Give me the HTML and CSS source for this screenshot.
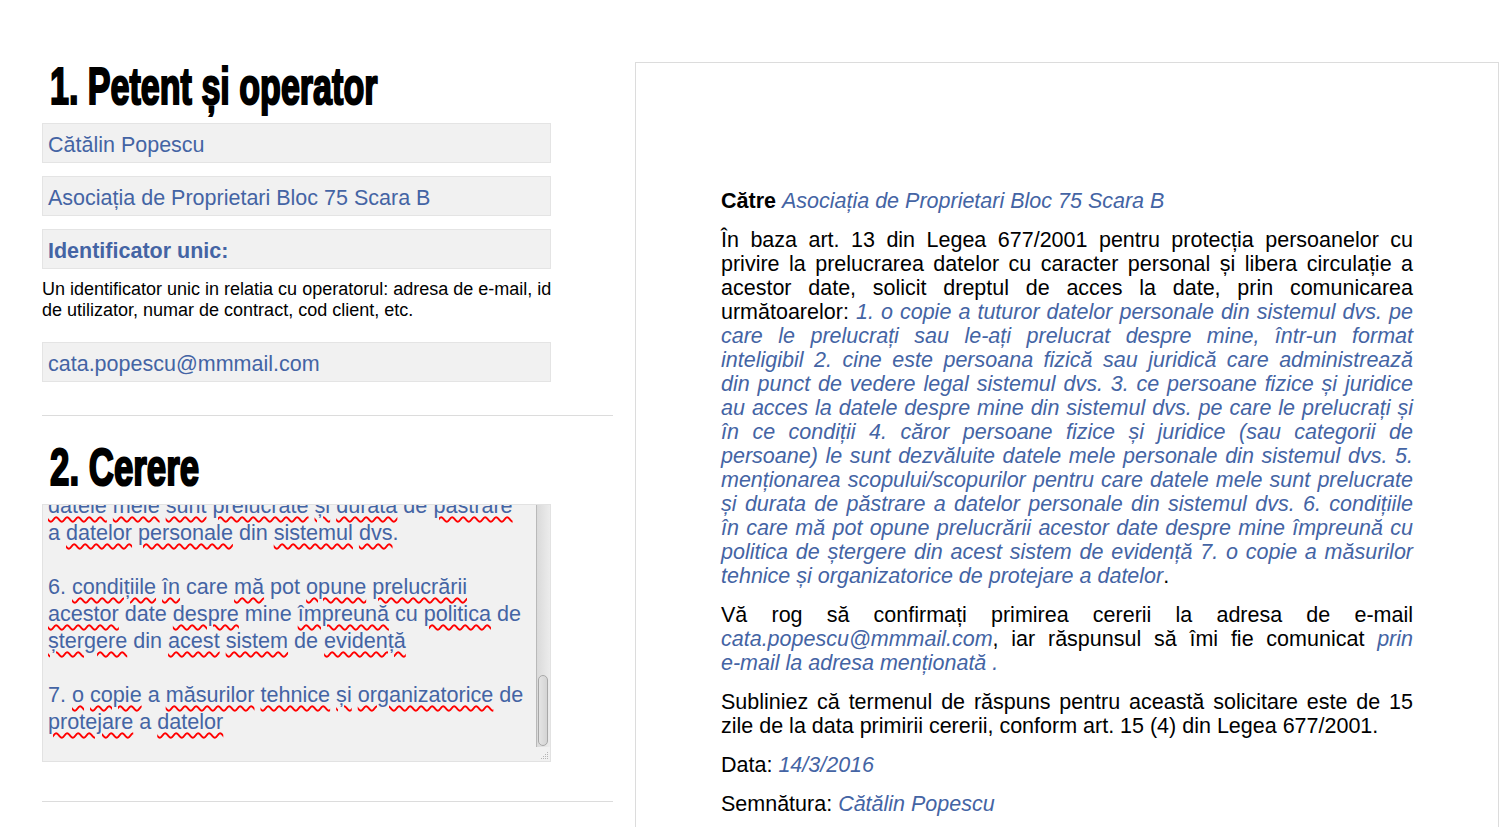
FILE: index.html
```html
<!DOCTYPE html>
<html lang="ro">
<head>
<meta charset="utf-8">
<title>Cerere acces date</title>
<link rel="stylesheet" href="styles.css">
</head>
<body>
<div class="page">
  <div class="left">
    <h1 class="title"><span>1. Petent și operator</span></h1>
    <div class="field">Cătălin Popescu</div>
    <div class="field">Asociația de Proprietari Bloc 75 Scara B</div>
    <div class="field field-bold">Identificator unic:</div>
    <p class="desc">Un identificator unic in relatia cu operatorul: adresa de e-mail, id de utilizator, numar de contract, cod client, etc.</p>
    <div class="field field-gap">cata.popescu@mmmail.com</div>
    <hr class="rule rule-1">
    <h1 class="title title-2"><span>2. Cerere</span></h1>
    <div class="textarea">
      <div class="ta-content">
        <div class="ta-line ta-first"><s>datele</s> <s>mele</s> <s>sunt</s> <s>prelucrate</s> <s>și</s> <s>durata</s> de <s>păstrare</s></div>
        <div class="ta-line">a <s>datelor</s> <s>personale</s> din <s>sistemul</s> <s>dvs</s>.</div>
        <div class="ta-line">&nbsp;</div>
        <div class="ta-line">6. <s>condițiile</s> <s>în</s> care <s>mă</s> pot <s>opune</s> <s>prelucrării</s></div>
        <div class="ta-line"><s>acestor</s> date <s>despre</s> mine <s>împreună</s> cu <s>politica</s> de</div>
        <div class="ta-line"><s>ștergere</s> din <s>acest</s> <s>sistem</s> de <s>evidență</s></div>
        <div class="ta-line">&nbsp;</div>
        <div class="ta-line">7. <s>o</s> <s>copie</s> a <s>măsurilor</s> <s>tehnice</s> <s>și</s> <s>organizatorice</s> de</div>
        <div class="ta-line"><s>protejare</s> a <s>datelor</s></div>
      </div>
      <div class="ta-scroll">
        <div class="ta-track"><div class="ta-thumb"></div></div>
        <div class="ta-grip">
          <svg width="12" height="12" viewBox="0 0 12 12"><g fill="#b5b5b5"><rect x="9" y="3" width="1" height="1"/><rect x="7" y="5" width="1" height="1"/><rect x="9" y="5" width="1" height="1"/><rect x="5" y="7" width="1" height="1"/><rect x="7" y="7" width="1" height="1"/><rect x="9" y="7" width="1" height="1"/><rect x="3" y="9" width="1" height="1"/><rect x="5" y="9" width="1" height="1"/><rect x="7" y="9" width="1" height="1"/><rect x="9" y="9" width="1" height="1"/></g></svg>
        </div>
      </div>
    </div>
    <hr class="rule rule-2">
  </div>
  <div class="letter">
    <p class="lp"><b>Către</b> <i>Asociația de Proprietari Bloc 75 Scara B</i></p>
    <p class="lp">În baza art. 13 din Legea 677/2001 pentru protecția persoanelor cu privire la prelucrarea datelor cu caracter personal și libera circulație a acestor date, solicit dreptul de acces la date, prin comunicarea următoarelor: <i>1. o copie a tuturor datelor personale din sistemul dvs. pe care le prelucrați sau le-ați prelucrat despre mine, într-un format inteligibil 2. cine este persoana fizică sau juridică care administrează <span class="nowrap">din punct</span> de vedere legal sistemul dvs. 3. ce persoane fizice și juridice au acces la datele despre mine din sistemul dvs. pe care le prelucrați și în ce condiții 4. căror persoane fizice și juridice (sau categorii de persoane) le sunt dezvăluite datele mele personale din sistemul dvs. 5. menționarea scopului/scopurilor pentru care datele mele sunt prelucrate și durata de păstrare a datelor personale din sistemul dvs. 6. condițiile <span class="nowrap">în care</span> mă pot opune prelucrării acestor date despre mine împreună cu politica de ștergere din acest sistem de evidență 7. o copie a măsurilor tehnice și organizatorice de protejare a datelor</i>.</p>
    <p class="lp">Vă rog să confirmați primirea cererii la adresa de e-mail <i>cata.popescu@mmmail.com</i>, iar răspunsul să îmi fie comunicat <i>prin <span class="nowrap">e-mail</span> la adresa menționată .</i></p>
    <p class="lp">Subliniez că termenul de răspuns pentru această solicitare este de 15 zile de la data primirii cererii, conform art. 15 (4) din Legea 677/2001.</p>
    <p class="lp">Data: <i>14/3/2016</i></p>
    <p class="lp">Semnătura: <i>Cătălin Popescu</i></p>
  </div>
</div>
</body>
</html>
```

FILE: styles.css
```css
html, body {
  margin: 0;
  padding: 0;
  background: #ffffff;
}

body {
  font-family: "Liberation Sans", Arial, sans-serif;
  color: #000;
  overflow: hidden;
}

.page {
  display: flex;
  align-items: flex-start;
  gap: 22px;
  padding-left: 42px;
}

.left {
  width: 571px;
  flex: none;
  padding-top: 58px;
  display: flex;
  flex-direction: column;
  align-items: flex-start;
}

.title {
  margin: 0 0 9px 8px;
  height: 56px;
  font-family: "Liberation Sans", sans-serif;
  font-weight: bold;
  font-size: 52px;
  line-height: 56px;
  color: #000;
  white-space: nowrap;
}

.title span {
  display: inline-block;
  transform: scaleX(0.655);
  transform-origin: left center;
  -webkit-text-stroke: 2.2px #000;
}

.title-2 {
  margin-top: 23px;
}

.title-2 span {
  transform: scaleX(0.67);
}

.field {
  box-sizing: border-box;
  width: 509px;
  height: 40px;
  margin-bottom: 13px;
  padding: 5px 5px 0 5px;
  display: flex;
  align-items: center;
  background: #f1f1f1;
  border: 1px solid #e4e4e4;
  color: #4464a4;
  font-size: 21.5px;
  white-space: nowrap;
}

.field-bold {
  font-weight: bold;
  margin-bottom: 10px;
}

.desc {
  width: 512px;
  margin: 0;
  font-size: 18px;
  line-height: 21px;
  color: #000;
}

.field-gap {
  margin-top: 21px;
}

.rule {
  box-sizing: border-box;
  width: 571px;
  height: 1px;
  margin: 20px 0 0 0;
  border: 0;
  background: #dcdcdc;
}

.rule-1 {
  margin-top: 20px;
}

.rule-2 {
  margin-top: 39px;
}

.textarea {
  box-sizing: border-box;
  width: 509px;
  height: 258px;
  display: flex;
  background: #f1f1f1;
  border: 1px solid #e2e2e2;
  overflow: hidden;
}

.ta-content {
  flex: 1;
  min-width: 0;
  padding-left: 5px;
  overflow: hidden;
  color: #4464a4;
  font-size: 21.6px;
  line-height: 27px;
  white-space: nowrap;
}

.ta-first {
  margin-top: -13px;
}

.ta-content s {
  text-decoration: underline wavy #f00;
  text-decoration-thickness: 1.7px;
  text-underline-offset: 3px;
}

.ta-scroll {
  width: 14px;
  flex: none;
  display: flex;
  flex-direction: column;
}

.ta-track {
  box-sizing: border-box;
  height: 242px;
  border-left: 1px solid #b9b9b9;
  background: linear-gradient(to right, #dadada, #ececec);
  display: flex;
  flex-direction: column;
  justify-content: flex-end;
  padding: 0 2px 1px 1px;
}

.ta-thumb {
  box-sizing: border-box;
  height: 71px;
  border: 1px solid #a8a8a8;
  border-radius: 5px;
  background: linear-gradient(to right, #e4e4e4, #d4d4d4);
}

.ta-grip {
  flex: 1;
  display: flex;
  align-items: flex-end;
  justify-content: flex-end;
}

.ta-grip svg {
  display: block;
}

.letter {
  box-sizing: border-box;
  width: 864px;
  min-height: 900px;
  flex: none;
  margin-top: 62px;
  padding: 126px 85px 80px 85px;
  border: 1px solid #dcdcdc;
  font-size: 21.5px;
  line-height: 24px;
  text-align: justify;
}

.lp {
  margin: 0 0 15px 0;
}

.lp i {
  color: #4464a4;
}

.lp b {
  font-weight: bold;
}

.nowrap {
  white-space: nowrap;
}
```
